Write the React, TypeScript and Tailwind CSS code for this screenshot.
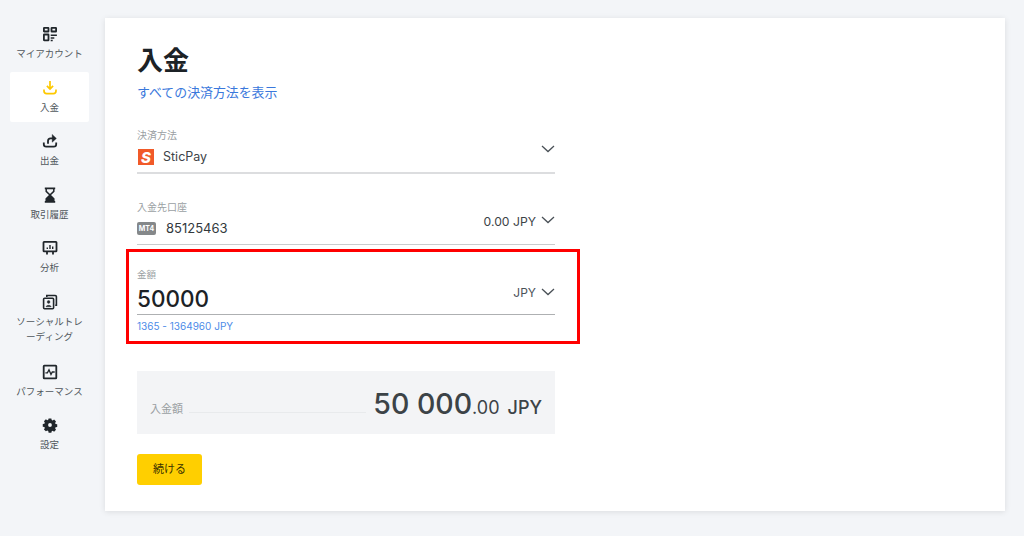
import type { ReactNode } from "react"

const fontStack = "font-['Inter','Noto_Sans_CJK_JP',sans-serif]"

const QrIcon = () => (
  <svg viewBox="0 0 16 16" className="h-[16px] w-[16px]" fill="none" stroke="#20262b" strokeWidth="1.800">
    <rect x="1.900" y="1.900" width="4.600" height="3.600" rx="0.300" />
    <rect x="9.500" y="1.900" width="4.600" height="3.600" rx="0.300" />
    <rect x="1.900" y="8.500" width="4.600" height="5.800" rx="0.300" />
    <path d="M8.700 9.300h6.200M8.700 12h3.600M8.700 14.500h2" strokeWidth="1.500" />
  </svg>
)

const DepositIcon = () => (
  <svg viewBox="0 0 16 16" className="h-[16px] w-[16px]" fill="none" stroke="#fdc800" strokeWidth="1.700">
    <path d="M8 1v7.400M4.900 5.900 8 9l3.100-3.100" />
    <path d="M2 9.500v1.600A2.600 2.600 0 0 0 4.600 13.700h6.800A2.600 2.600 0 0 0 14 11.100V9.500" />
  </svg>
)

const WithdrawIcon = () => (
  <svg viewBox="0 0 16 16" className="h-[16px] w-[16px]" fill="none" stroke="#20262b" strokeWidth="1.800">
    <path d="M1.800 9.500v1.800a2.400 2.400 0 0 0 2.400 2.400h7.600a2.400 2.400 0 0 0 2.400-2.400V9.500" />
    <path d="M6 10.800V8a2.600 2.600 0 0 1 2.600-2.600h3" />
    <path d="m10.200 1.400 4.200 4-4.200 3.800z" fill="#20262b" strokeWidth="0.400" />
  </svg>
)

const HourglassIcon = () => (
  <svg viewBox="0 0 16 16" className="h-[16px] w-[16px]" fill="none" stroke="#20262b" strokeWidth="1.500">
    <path d="M2.800 1.400h10.400M2.800 14.800h10.400" strokeWidth="1.800" />
    <path d="M4.200 2v2.400L8 8l3.800-3.600V2" />
    <path d="M4.200 14v-2.200L8 8l3.800 3.800V14z" fill="#20262b" />
  </svg>
)

const AnalysisIcon = () => (
  <svg viewBox="0 0 16 16" className="h-[16px] w-[16px]" fill="none" stroke="#20262b" strokeWidth="1.800">
    <rect x="1.500" y="1.900" width="13" height="9.400" rx="0.600" />
    <path d="M5 11.400v3.200M11 11.400v3.200" />
    <path d="M5.300 9V7.400M8 9V5M10.700 9V6.400" strokeWidth="1.400" />
  </svg>
)

const SocialIcon = () => (
  <svg viewBox="0 0 16 16" className="h-[16px] w-[16px]" fill="none" stroke="#20262b" strokeWidth="1.600">
    <rect x="1.600" y="4.300" width="10" height="10.500" rx="1" />
    <path d="M4.800 3V1.500h8.400a1.200 1.200 0 0 1 1.200 1.200v8.600h-1.200" />
    <circle cx="6.600" cy="8" r="1.400" fill="#20262b" strokeWidth="0.400" />
    <path d="M4 12.800c.4-2 4.800-2 5.200 0z" fill="#20262b" strokeWidth="0.400" />
  </svg>
)

const PerformanceIcon = () => (
  <svg viewBox="0 0 16 16" className="h-[16px] w-[16px]" fill="none" stroke="#20262b" strokeWidth="1.800">
    <rect x="1.700" y="1.700" width="12.600" height="12.600" rx="0.600" />
    <path d="M3.400 8.800h2l1.600-3 2 4.600 1.300-2.400h2.400" strokeWidth="1.300" />
  </svg>
)

const GearIcon = () => (
  <svg viewBox="0 0 16 16" className="h-[16px] w-[16px]">
    <path
      fill="#20262b"
      fillRule="evenodd"
      d="M6.400.8h3.200l.4 1.900 1.100.5 1.700-1 2.200 2.200-1 1.700.5 1.100 1.900.4v3.200l-1.900.4-.5 1.100 1 1.700-2.200 2.200-1.700-1-1.100.5-.4 1.900H6.400L6 15.400l-1.100-.5-1.700 1L1 13.700l1-1.700-.5-1.100-1.900-.4V7.300l1.900-.4L2 5.800 1 4.100 3.200 1.900l1.700 1L6 2.400zM8 6.300a2.200 2.200 0 1 0 0 4.400 2.200 2.200 0 0 0 0-4.400z"
      transform="translate(0 -.4) translate(1.100 1.100) scale(.86)"
    />
  </svg>
)

const Chevron = () => (
  <svg viewBox="0 0 14 8" className="h-[8px] w-[14px]" fill="none" stroke="#4a5157" strokeWidth="1.300">
    <path d="m1 1 6 5.500L13 1" />
  </svg>
)

const navItems: { label: ReactNode; icon: ReactNode; active?: boolean; tall?: boolean }[] = [
  { label: "マイアカウント", icon: <QrIcon /> },
  { label: "入金", icon: <DepositIcon />, active: true },
  { label: "出金", icon: <WithdrawIcon /> },
  { label: "取引履歴", icon: <HourglassIcon /> },
  { label: "分析", icon: <AnalysisIcon /> },
  { label: <>ソーシャルトレ<br />ーディング</>, icon: <SocialIcon />, tall: true },
  { label: "パフォーマンス", icon: <PerformanceIcon /> },
  { label: "設定", icon: <GearIcon /> },
]

function Sidebar() {
  return (
    <aside className="flex w-[105px] shrink-0 flex-col gap-[3.6px] pt-[18px] pr-[16px] pl-[10px]">
      {navItems.map((item, i) => (
        <div
          key={i}
          className={`flex flex-col items-center rounded-[2px] pt-[8px] ${item.tall ? "h-[66px]" : "h-[50px]"} ${item.active ? "bg-white" : ""}`}
        >
          {item.icon}
          <div className="mt-[4px] text-center text-[9.5px] leading-[15px] whitespace-nowrap text-[#50575c]">
            {item.label}
          </div>
        </div>
      ))}
    </aside>
  )
}

export default function App() {
  return (
    <div className={`flex h-[536px] w-[1024px] overflow-hidden bg-[#f3f5f8] ${fontStack}`}>
      <Sidebar />
      <main className="mt-[18px] h-[493px] w-[900px] bg-white pl-[32px] shadow-[0_1px_6px_rgba(0,0,0,0.1)]">
        <div className="w-[418px]">
          <h1 className="mt-[25px] text-[26px] leading-[36px] font-bold text-[#1c2226]">入金</h1>
          <a className="mt-[4px] block text-[12.9px] leading-[20px] text-[#3a78dc]">すべての決済方法を表示</a>

          <div className="mt-[22px] h-[49px] border-b-2 border-[#dcdddf]">
            <div className="pt-[3px] text-[10px] leading-[14px] text-[#9a9fa3]">決済方法</div>
            <div className="mt-[5px] flex items-center">
              <div className="ml-[1px] flex h-[16px] w-[16px] items-center justify-center bg-[#f15a29] text-[15px] leading-none font-extrabold text-white italic">
                S
              </div>
              <span className="ml-[9px] text-[12.5px] leading-[20px] text-[#3c4347]">SticPay</span>
              <span className="mt-[-16px] ml-auto"><Chevron /></span>
            </div>
          </div>

          <div className="mt-[23px] h-[48px] border-b border-[#c9cbcd]">
            <div className="text-[10px] leading-[20px] text-[#9a9fa3]">入金先口座</div>
            <div className="mt-[1px] flex items-center">
              <div className="flex h-[13px] w-[19px] items-center justify-center rounded-[2px] bg-[#85888a] text-[7px] leading-none font-bold text-white">
                MT4
              </div>
              <span className="ml-[10px] text-[13px] leading-[20px] text-[#33393d]">85125463</span>
              <span className="mt-[-12px] ml-auto text-[12.2px] leading-[20px] text-[#3c4347]">0.00 JPY</span>
              <span className="mt-[-16px] ml-[5px]"><Chevron /></span>
            </div>
          </div>

          <div className="relative pt-[22px]">
            <div className="absolute top-[4px] -right-[25px] -left-[11px] h-[95px] border-[3px] border-[#ff0000]" />
            <div className="text-[9.5px] leading-[16px] text-[#9a9fa3]">金額</div>
            <div className="flex h-[32px] items-center border-b border-[#aeb0b2]">
              <span className="text-[22.5px] leading-[30px] font-medium text-[#1c2226]">50000</span>
              <span className="mt-[-12px] ml-auto text-[12px] leading-[20px] text-[#4a5157]">JPY</span>
              <span className="mt-[-14px] ml-[5px]"><Chevron /></span>
            </div>
            <div className="mt-[4px] text-[10px] leading-[14px] text-[#4d8be8]">1365 - 1364960 JPY</div>
          </div>

          <div className="mt-[38px] flex h-[63px] items-end bg-[#f3f4f6] px-[13px]">
            <span className="mb-[17px] text-[11px] leading-[16px] text-[#9a9fa3]">入金額</span>
            <div className="mb-[21px] ml-[6px] h-px flex-1 bg-[#e8eaec]" />
            <div className="mb-[8px] ml-[7px] text-[#3c4347]">
              <span className="text-[28.5px] leading-[36px] font-medium">50 000</span>
              <span className="text-[18px] leading-[36px]">.00</span>
              <span className="ml-[8px] text-[18px] leading-[36px] font-medium">JPY</span>
            </div>
          </div>

          <button className="mt-[20px] h-[31px] w-[65px] rounded-[3px] bg-[#ffcf00] text-[11px] text-[#3a3200]">
            続ける
          </button>
        </div>
      </main>
    </div>
  )
}
